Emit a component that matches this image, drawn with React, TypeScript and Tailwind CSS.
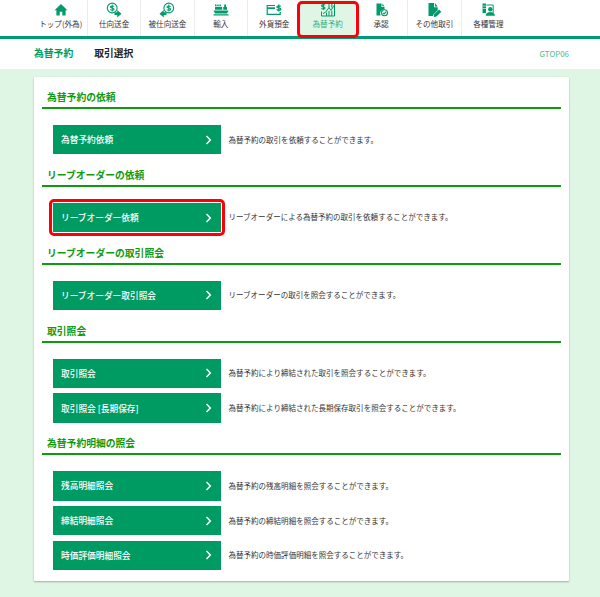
import type { ReactNode } from "react";

type NavItem = { label: string; icon: ReactNode; active?: boolean };
type Entry = { label: string; desc: string; marked?: boolean };
type Section = { title: string; entries: Entry[] };

function Coin() {
  return (
    <>
      <circle cx="6.2" cy="6" r="4.9" fill="none" stroke="currentColor" strokeWidth="1.1" />
      <path
        d="M8 4.6c-.4-.9-3.6-1-3.6.4 0 1.5 3.7.6 3.7 2.2 0 1.4-3.3 1.3-3.8.2M6.2 2.6v6.800"
        fill="none"
        stroke="currentColor"
        strokeWidth="1.1"
      />
    </>
  );
}

const navItems: NavItem[] = [
  {
    label: "トップ(外為)",
    icon: <path d="M8 2 1.6 8.2h1.800v5.300h3.300V9.800h2.600v3.700h3.300V8.200h1.800z" fill="currentColor" />,
  },
  {
    label: "仕向送金",
    icon: (
      <>
        <Coin />
        <path d="M8.500 10.300h2.700V8l4.300 3.700-4.300 3.800v-2.400H8.500z" fill="currentColor" />
      </>
    ),
  },
  {
    label: "被仕向送金",
    icon: (
      <>
        <g transform="translate(3.6 0)">
          <Coin />
        </g>
        <path d="M7.500 10.300H4.800V8L.5 11.700l4.300 3.800v-2.400h2.700z" fill="currentColor" />
      </>
    ),
  },
  {
    label: "輸入",
    icon: (
      <path
        d="M2 2.500h1.500V4H2zM4.200 2.500h1.500V4H4.200zM6.400 2.500h1.500V4H6.400zM2 4.700h7.200v3.100H2zM11.200 5V2.500H13V5h1v2.800h-3.800V5zM.5 8.400h15l-1.500 3H2zM.5 12.200h15v1.400H.5z"
        fill="currentColor"
      />
    ),
  },
  {
    label: "外貨預金",
    icon: (
      <>
        <path d="M9 3.500H1.200v8.800h13V10" fill="none" stroke="currentColor" strokeWidth="1.2" />
        <path d="M1.200 5.300H9V7H1.200z" fill="currentColor" />
        <path
          d="M14.800 4.500c-.6-1-3.900-.9-3.900.4 0 1.500 4 .6 4 2.300 0 1.500-3.500 1.300-4.200.1M12.800 2.500v7"
          fill="none"
          stroke="currentColor"
          strokeWidth="1.3"
        />
      </>
    ),
  },
  {
    label: "為替予約",
    active: true,
    icon: (
      <>
        <path
          d="M5 3.200c-.6-1-3.500-.7-3.500.5C1.500 5.200 5 4.500 5 6c0 1.400-3 1.200-3.700.2M3.300 1v7"
          fill="none"
          stroke="currentColor"
          strokeWidth="1.1"
        />
        <path
          d="M7 1.500h7.500V14h-13V9.500M3 11.500l2.500-1.200L7.300 8 9 5.500l2 3 3-5M6.500 10.500V14M9 1.500v4M9 9v5M11.800 2v3.500M11.800 9v5"
          fill="none"
          stroke="currentColor"
          strokeWidth="1"
        />
      </>
    ),
  },
  {
    label: "承認",
    icon: (
      <>
        <path d="M3.500 1.500h5V5h3v2.400A4.200 4.200 0 0 0 7.500 13.500h-4zM9.300 1.500l2.200 2.700H9.300z" fill="currentColor" />
        <circle cx="11.500" cy="10.800" r="3" fill="none" stroke="currentColor" strokeWidth="1.1" />
        <path d="m10 10.800 1.100 1.100 2.100-2.300" fill="none" stroke="currentColor" strokeWidth="1.1" />
      </>
    ),
  },
  {
    label: "その他取引",
    icon: (
      <>
        <path d="M2.500 1H8v4.300h3.700v3L7 13v1H2.500zM8.900 1l2.800 3.400H8.900z" fill="currentColor" />
        <path d="m13 7.500 2.300 2.300-4.800 4.800-2.800.5.500-2.800z" fill="currentColor" />
      </>
    ),
  },
  {
    label: "各種管理",
    icon: (
      <>
        <path d="M2.500 1.500H6V11H2.500z" fill="currentColor" />
        <path d="M2.500 4H6M2.500 6.500H6" stroke="white" strokeWidth=".6" />
        <path d="M6.500 3h6.700v8" fill="none" stroke="currentColor" strokeWidth="1" />
        <circle cx="10.300" cy="7.300" r="2.200" fill="currentColor" />
        <path d="M5.700 13.700c0-5 9.200-5 9.200 0z" fill="currentColor" />
      </>
    ),
  },
];

const sections: Section[] = [
  {
    title: "為替予約の依頼",
    entries: [{ label: "為替予約依頼", desc: "為替予約の取引を依頼することができます。" }],
  },
  {
    title: "リーブオーダーの依頼",
    entries: [
      {
        label: "リーブオーダー依頼",
        desc: "リーブオーダーによる為替予約の取引を依頼することができます。",
        marked: true,
      },
    ],
  },
  {
    title: "リーブオーダーの取引照会",
    entries: [{ label: "リーブオーダー取引照会", desc: "リーブオーダーの取引を照会することができます。" }],
  },
  {
    title: "取引照会",
    entries: [
      { label: "取引照会", desc: "為替予約により締結された取引を照会することができます。" },
      { label: "取引照会 [長期保存]", desc: "為替予約により締結された長期保存取引を照会することができます。" },
    ],
  },
  {
    title: "為替予約明細の照会",
    entries: [
      { label: "残高明細照会", desc: "為替予約の残高明細を照会することができます。" },
      { label: "締結明細照会", desc: "為替予約の締結明細を照会することができます。" },
      { label: "時価評価明細照会", desc: "為替予約の時価評価明細を照会することができます。" },
    ],
  },
];

function NavTab({ item }: { item: NavItem }) {
  return (
    <button
      className={`relative flex h-full w-[53.4px] flex-col items-center border-r border-[#ececec] pt-[2px] text-[#009b6b] last:border-r-0 ${
        item.active ? "bg-[#dff6e4]" : ""
      }`}
    >
      <svg viewBox="0 0 16 16" className="size-4">
        {item.icon}
      </svg>
      <span
        className={`whitespace-nowrap text-[7.6px] leading-[12px] ${
          item.active ? "text-[#35ae80]" : "text-[#333]"
        }`}
      >
        {item.label}
      </span>
      {item.active && (
        <span className="absolute -left-[4px] top-px z-10 h-[37px] w-[62px] rounded-[5px] border-[3px] border-[#fb0007]" />
      )}
    </button>
  );
}

function EntryRow({ entry }: { entry: Entry }) {
  return (
    <div className="flex items-center">
      <button className="relative flex h-[29.4px] w-[167.5px] shrink-0 items-center justify-between bg-[#009b63] pr-[8.5px] pl-2 text-[8.7px] font-medium text-white">
        {entry.label}
        <svg viewBox="0 0 7 10" className="h-[10px] w-[7px]" fill="none" stroke="white" strokeWidth="1.5">
          <path d="m1.500 1 3.800 4-3.800 4" />
        </svg>
        {entry.marked && (
          <span className="absolute -inset-[4px] rounded-[5px] border-[3px] border-[#fb0007]" />
        )}
      </button>
      <p className="ml-2 pb-px whitespace-nowrap text-[7.52px] text-[#333]">{entry.desc}</p>
    </div>
  );
}

export default function App() {
  return (
    <div className="h-[597px] overflow-hidden bg-[#dff6e4] font-['Noto_Sans_CJK_JP',sans-serif]">
      <header className="bg-white">
        <nav className="flex h-[39px] border-b-[3px] border-[#009b73] pl-[34.5px]">
          {navItems.map((item) => (
            <NavTab key={item.label} item={item} />
          ))}
        </nav>
        <div className="flex h-[30px] items-center pr-[31px] pb-px pl-[34px] text-[9.8px] font-bold">
          <span className="text-[#009b63]">為替予約</span>
          <h1 className="ml-[21px] text-[#222]">取引選択</h1>
          <span className="ml-auto text-[7.9px] font-normal text-[#4db98f]">GTOP06</span>
        </div>
      </header>

      <main className="mt-2 ml-[34px] h-[504px] w-[535px] rounded-[1px] bg-white px-2 pt-[12px] shadow-[0_1px_2px_rgba(0,0,0,0.3)]">
        {sections.map((section) => (
          <section key={section.title} className="mb-[12.5px]">
            <h2 className="h-5 border-b-2 border-[#109a10] pl-[5px] text-[9.8px] leading-[16px] font-bold text-[#109a10]">
              {section.title}
            </h2>
            <div className="mt-4 flex flex-col gap-[5.3px] pl-[11px]">
              {section.entries.map((entry) => (
                <EntryRow key={entry.label} entry={entry} />
              ))}
            </div>
          </section>
        ))}
      </main>
    </div>
  );
}
